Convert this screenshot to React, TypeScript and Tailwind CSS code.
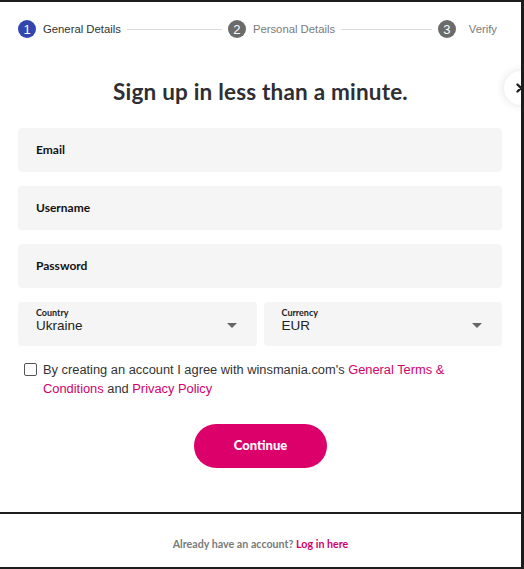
const steps = [
  { num: 1, label: "General Details", active: true },
  { num: 2, label: "Personal Details", active: false },
  { num: 3, label: "Verify", active: false },
];

const fields = ["Email", "Username", "Password"];

function Stepper() {
  return (
    <div className="flex items-center pl-[18px] pr-[24px] pt-[18px] h-[36px] font-['Liberation_Sans',Arial,sans-serif] text-[11.3px]">
      {steps.map((step, i) => (
        <div key={step.num} className={"flex items-center " + (i < steps.length - 1 ? "flex-1" : "")}>
          <span
            className={
              "w-[18px] h-[18px] rounded-full flex items-center justify-center text-white text-[13px] leading-none " +
              (step.active ? "bg-[#3346b0]" : "bg-[#6b6b6b]")
            }
          >
            {step.num}
          </span>
          <span className={(step.active ? "text-[#333]" : "text-[#7a7a7a]") + (i === 2 ? " ml-[13px]" : " ml-[7px]")}>
            {step.label}
          </span>
          {i < steps.length - 1 && <div className="flex-1 h-px bg-[#dcdcdc] mx-[6px]" />}
        </div>
      ))}
    </div>
  );
}

function SelectBox({ label, value }: { label: string; value: string }) {
  return (
    <div className="flex-1 h-[44px] bg-[#f5f5f5] rounded-[4px] pl-[18px] pr-[20px] flex items-center justify-between">
      <div className="flex flex-col self-start pt-[6px]">
        <span className="text-[9px] leading-[10px] font-bold text-[#222] font-['Lato',sans-serif]">{label}</span>
        <span className="text-[13.5px] leading-[15px] text-[#222] font-['Liberation_Sans',Arial,sans-serif]">{value}</span>
      </div>
      <svg width="10" height="5" viewBox="0 0 10 5" className="mt-[2px]">
        <path d="M0 0 L10 0 L5 5 Z" fill="#666" />
      </svg>
    </div>
  );
}

export default function App() {
  return (
    <div className="w-[524px] h-[569px] bg-[#1c1c1c] pt-[2px]">
      <div className="relative w-[521px] h-[565px] bg-white overflow-hidden flex flex-col">
        <Stepper />

        <h1 className="mt-[40px] text-center text-[22.5px] leading-[28px] font-bold text-[#2e2e33] font-['Lato',sans-serif] tracking-[0.2px]">
          Sign up in less than a minute.
        </h1>

        <div className="mt-[22px] mx-[18px] w-[484px] flex flex-col gap-[14px]">
          {fields.map((f) => (
            <div key={f} className="h-[44px] bg-[#f5f5f5] rounded-[4px] pl-[18px] flex items-center">
              <span className="text-[12px] font-bold text-[#111] font-['Lato',sans-serif]">{f}</span>
            </div>
          ))}
          <div className="flex gap-[7px]">
            <SelectBox label="Country" value="Ukraine" />
            <SelectBox label="Currency" value="EUR" />
          </div>
        </div>

        <div className="mt-[14px] ml-[24px] mr-[60px] flex items-start font-['Liberation_Sans',Arial,sans-serif] text-[12.85px] leading-[19px] text-[#333]">
          <span className="mt-[3px] w-[13px] h-[13px] shrink-0 border border-[#555] rounded-[2px] bg-white" />
          <p className="ml-[6px]">
            By creating an account I agree with winsmania.com's{" "}
            <span className="text-[#d1006b]">General Terms &amp; Conditions</span> and{" "}
            <span className="text-[#d1006b]">Privacy Policy</span>
          </p>
        </div>

        <div className="mt-[26px] flex justify-center">
          <button className="w-[133px] h-[44px] rounded-full bg-[#dc006b] text-white text-[13px] font-black font-['Lato',sans-serif]">
            Continue
          </button>
        </div>

        <div className="mt-auto h-[55px] border-t-[2px] border-[#1c1c1c] flex items-center justify-center pt-[8px]">
          <span className="text-[10.7px] font-bold text-[#7a7a7a] font-['Lato',sans-serif]">
            Already have an account? <span className="text-[#d1006b]">Log in here</span>
          </span>
        </div>

        <button className="absolute left-[504px] top-[69px] w-[34px] h-[34px] rounded-full bg-white shadow-[0_0_10px_rgba(0,0,0,0.12)] flex items-center justify-center">
          <svg width="10" height="10" viewBox="0 0 10 10">
            <path d="M1.5 1.5 L8.5 8.5 M8.5 1.5 L1.5 8.5" stroke="#222" strokeWidth="2.4" strokeLinecap="round" />
          </svg>
        </button>
      </div>
    </div>
  );
}
